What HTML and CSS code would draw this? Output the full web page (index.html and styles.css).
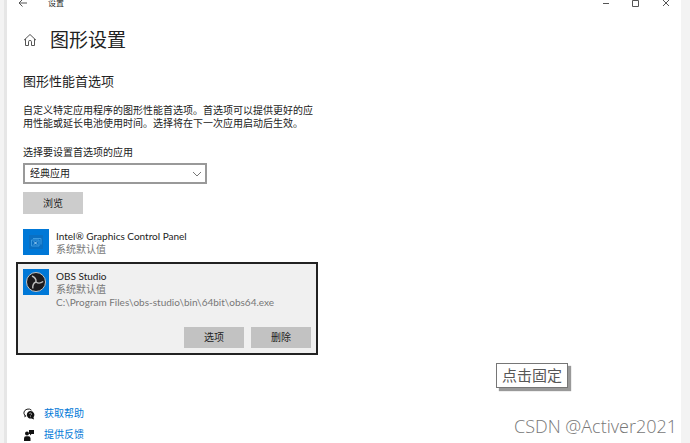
FILE: index.html
```html
<!DOCTYPE html>
<html lang="zh-CN">
<head>
    <meta charset="UTF-8">
    <meta name="viewport" content="width=device-width, initial-scale=1.0">
    <title>图形设置</title>
    <link rel="stylesheet" href="styles.css">
</head>
<body>
    <div class="window">
        <header class="titlebar">
            <svg class="back" viewBox="0 0 10 10"><path d="M9 5H1M4.500 1.500L1 5l3.500 3.500"/></svg>
            <span class="caption">设置</span>
            <svg class="control" viewBox="0 0 10 10"><path d="M2 5.500h6"/></svg>
            <svg class="control" viewBox="0 0 10 10"><path d="M1.500 2.500h6v6h-6z"/></svg>
            <svg class="control" viewBox="0 0 10 10"><path d="M2 2l6 6M8 2L2 8"/></svg>
        </header>

        <main>
            <div class="page-title">
                <svg class="home" viewBox="0 0 14 14"><path d="M1 7.200L7 1.500l6 5.700M2.500 6v6.500h3V8.500q0-1 1.500-1t1.500 1v4h3V6"/></svg>
                <h1>图形设置</h1>
            </div>

            <h2>图形性能首选项</h2>
            <p class="intro">自定义特定应用程序的图形性能首选项。首选项可以提供更好的应<br>用性能或延长电池使用时间。选择将在下一次应用启动后生效。</p>

            <label for="app-type">选择要设置首选项的应用</label>
            <div class="select-box">
                <select id="app-type">
                    <option>经典应用</option>
                    <option>Microsoft Store 应用</option>
                </select>
                <svg class="chevron" viewBox="0 0 10 10"><path d="M1 3l4 4 4-4"/></svg>
            </div>
            <button type="button">浏览</button>

            <ul class="apps">
                <li class="app">
                    <svg class="app-icon" viewBox="0 0 26 26">
                        <rect width="26" height="26" fill="#0078d7"/>
                        <rect x="6" y="6" width="14" height="14" fill="#0a6fc2"/>
                        <path d="M10 9.500h8v6M8.500 11h7.500v6H8.500z" fill="none" stroke="#3d9be0"/>
                        <path d="M11 12.500l3 3M14 12.500l-3 3" stroke="#a5d4f5"/>
                    </svg>
                    <div class="app-text">
                        <div class="name">Intel® Graphics Control Panel</div>
                        <div class="detail">系统默认值</div>
                    </div>
                </li>
                <li class="app selected">
                    <svg class="app-icon" viewBox="0 0 26 26">
                        <rect width="26" height="26" fill="#0078d7"/>
                        <circle cx="13" cy="13" r="9.500" fill="#1d1b1e" stroke="#c4c4c4"/>
                        <g fill="none" stroke="#bdbdbd" stroke-width="1.400">
                            <path d="M13 13Q13.500 9 9 7"/>
                            <path d="M13 13Q13.500 9 9 7" transform="rotate(120 13 13)"/>
                            <path d="M13 13Q13.500 9 9 7" transform="rotate(240 13 13)"/>
                        </g>
                    </svg>
                    <div class="app-text">
                        <div class="name">OBS Studio</div>
                        <div class="detail">系统默认值</div>
                        <div class="detail">C:\Program Files\obs-studio\bin\64bit\obs64.exe</div>
                    </div>
                    <div class="actions">
                        <button type="button">选项</button>
                        <button type="button">删除</button>
                    </div>
                </li>
            </ul>

            <nav>
                <div class="link-row">
                    <svg viewBox="0 0 12 12">
                        <path d="M2 7.500Q.5 6 1 4t3-2.800 4.500 1" fill="none" stroke="#222"/>
                        <path d="M1.500 6.500v3l2-1.500z" fill="#222"/>
                        <path d="M7.500 3a3.800 3.800 0 1 0 1 7.500l2.500 1-.5-2.300A3.800 3.800 0 0 0 7.500 3z" fill="#111"/>
                        <path d="M6.300 5.500q1.200-1 2 0t-.8 1.800M7.500 8.300v.9" fill="none" stroke="#ccc" stroke-width=".8"/>
                    </svg>
                    <a href="#help">获取帮助</a>
                </div>
                <div class="link-row">
                    <svg viewBox="0 0 12 12">
                        <path d="M6 1h5v4H8.500L7 6.500V5H6z" fill="#111"/>
                        <circle cx="4" cy="4.500" r="2" fill="#111"/>
                        <path d="M1 12V9.500Q1 7.300 3 7.300h2.500Q7.500 7.300 7.500 9.500V12z" fill="#111"/>
                    </svg>
                    <a href="#feedback">提供反馈</a>
                </div>
            </nav>
        </main>
    </div>

    <div class="tooltip" role="tooltip">点击固定</div>
    <div class="watermark">CSDN @Activer2021</div>
</body>
</html>
```

FILE: styles.css
```css
* {
    box-sizing: border-box;
}
body {
    margin: 0;
    background: #f3f3f3;
    color: #222;
    font-family: "Open Sans", "Noto Sans CJK SC", sans-serif;
    font-size: 10px;
    line-height: 13px;
}
.window {
    min-height: 100vh;
    margin: 0 9px 0 4px;
    border-left: 3px solid #e6e6e6;
    background: #fff;
}
svg {
    flex: none;
    fill: none;
    stroke: #555;
}
.app-icon, .link-row svg {
    stroke: none;
}

/* Title bar, scrolled partly out of view */
.titlebar {
    display: flex;
    align-items: flex-end;
    height: 8px;
    padding: 0 10px 0 11px;
    overflow: hidden;
}
.titlebar svg {
    width: 10px;
    height: 10px;
}
.caption {
    flex: 1;
    margin-left: 20px;
    font-size: 8px;
    line-height: 10px;
}
.control {
    margin-left: 20px;
}

main {
    padding: 20px 16px 0;
}
.page-title {
    display: flex;
    align-items: center;
    gap: 13px;
    height: 24px;
}
.home {
    width: 14px;
    height: 14px;
}
h1 {
    margin: 0;
    font-size: 19px;
    font-weight: normal;
    line-height: 24px;
}
h2 {
    margin: 21px 0 15px;
    font-size: 13px;
    font-weight: normal;
    line-height: 16px;
}
.intro {
    margin: 0 0 16px;
}
label {
    display: block;
    margin-bottom: 4px;
}
.select-box {
    position: relative;
    width: 184px;
    margin-bottom: 8px;
}
select {
    display: block;
    width: 100%;
    height: 21px;
    padding: 0 5px;
    border: 2px solid #999;
    border-radius: 0;
    background: #fff;
    color: inherit;
    font: inherit;
    appearance: none;
}
.chevron {
    position: absolute;
    top: 6px;
    right: 5px;
    width: 10px;
    height: 10px;
    stroke: #777;
    pointer-events: none;
}
button {
    width: 60px;
    height: 22px;
    padding: 0;
    border: none;
    background: #ccc;
    color: inherit;
    font: inherit;
}

/* App list */
.apps {
    margin: 8px 0 52px -7px;
    padding: 0;
    list-style: none;
}
.app {
    display: flex;
    flex-wrap: wrap;
    gap: 0 7px;
    width: 302px;
    padding: 7px 7px 6px;
    font-family: Lato, "Noto Sans CJK SC", sans-serif;
}
.selected {
    padding: 5px;
    border: 2px solid #222;
    background: #f0f0f0;
}
.app-icon {
    width: 26px;
    height: 26px;
}
.app-text {
    padding-top: 1px;
}
.detail {
    color: #777;
}
.actions {
    display: flex;
    justify-content: flex-end;
    gap: 7px;
    width: 100%;
    margin-top: 18px;
}
.actions button {
    height: 21px;
    background: #c2c2c2;
}

nav {
    display: grid;
    gap: 8px;
}
.link-row {
    display: flex;
    align-items: center;
    gap: 9px;
}
.link-row svg {
    width: 12px;
    height: 12px;
}
a {
    color: #0078d7;
    text-decoration: none;
}

/* Floating over the window */
.tooltip {
    position: absolute;
    right: 122px;
    bottom: 55px;
    padding: 2px 5px;
    border: 1px solid #767676;
    background: #fff;
    box-shadow: 3px 3px 1px #999;
    color: #575757;
    font-size: 15px;
    line-height: 19px;
}
.watermark {
    position: absolute;
    right: 13px;
    bottom: 5px;
    color: #777;
    font-size: 18px;
    font-weight: 300;
    line-height: 24px;
}
```
